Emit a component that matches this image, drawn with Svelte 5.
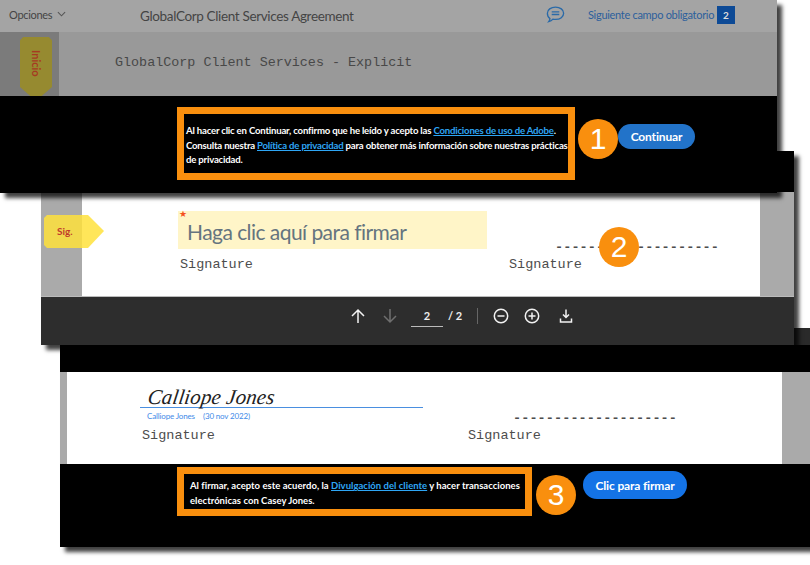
<script>
  // the three overlapping steps of the signing flow
  const dashes = '-'.repeat(20);
</script>

<div class="canvas">
  <section class="win three">
    <div class="strip"></div>
    <div class="black-top"></div>
    <div class="doc">
      <div class="gutter-l"></div>
      <div class="page">
        <div class="col signed">
          <div class="sig-line"><span class="hand">Calliope Jones</span></div>
          <div class="sig-meta"><span>Calliope Jones</span><span>(30 nov 2022)</span></div>
          <div class="mono">Signature</div>
        </div>
        <div class="col right">
          <div class="mono dash">{dashes}</div>
          <div class="mono">Signature</div>
        </div>
      </div>
      <div class="gutter-r"></div>
    </div>
    <div class="bar">
      <div class="callout">
        <div>Al firmar, acepto este acuerdo, la <a href="#a">Divulgación del cliente</a> y hacer transacciones</div>
        <div>electrónicas con Casey Jones.</div>
      </div>
      <button class="btn">Clic para firmar</button>
      <span class="badge">3</span>
    </div>
  </section>

  <section class="win two">
    <div class="black-top"></div>
    <div class="doc">
      <div class="gutter-l">
        <div class="tag">Sig.</div>
      </div>
      <div class="page">
        <div class="col field-col">
          <div class="field"><span class="star">★</span>Haga clic aquí para firmar</div>
          <div class="mono">Signature</div>
        </div>
        <div class="col right">
          <div class="mono dash">{dashes}</div>
          <div class="mono">Signature</div>
        </div>
      </div>
      <div class="gutter-r"></div>
    </div>
    <div class="tools">
      <svg class="ic" viewBox="0 0 16 16"><path d="M8 15V2M2 8l6-6 6 6" /></svg>
      <svg class="ic off" viewBox="0 0 16 16"><path d="M8 1v13M2 8l6 6 6-6" /></svg>
      <div class="pager"><span class="cur">2</span><span class="tot">/ 2</span></div>
      <i class="sep"></i>
      <svg class="ic" viewBox="0 0 16 16"><circle cx="8" cy="8" r="6.7" /><path d="M4.5 8h7" /></svg>
      <svg class="ic" viewBox="0 0 16 16"><circle cx="8" cy="8" r="6.7" /><path d="M4.5 8h7M8 4.5v7" /></svg>
      <svg class="ic dl" viewBox="0 0 16 16"><path d="M8 1.500v8M5 6.500l3 3 3-3M2.500 10.500v3.500h11v-3.500" /></svg>
    </div>
    <span class="badge">2</span>
  </section>

  <section class="win one">
    <header class="top">
      <span class="opts">Opciones</span>
      <svg class="chev" viewBox="0 0 10 6"><path d="M1 1l4 4 4-4" /></svg>
      <span class="title">GlobalCorp Client Services Agreement</span>
      <svg class="chat" viewBox="0 0 20 18"><path d="M10 1.200c5 0 8.600 2.800 8.600 6.500S15 14.200 10 14.200c-1 0-2-.1-2.800-.3-1 1.300-2.600 2.300-4.400 2.700.8-1 1.200-2 1.300-3.200C2.500 12.300 1.400 10.200 1.400 7.700 1.400 4 5 1.200 10 1.200z" /><path d="M6 6.300h8M6 9h8" /></svg>
      <span class="next">Siguiente campo obligatorio</span>
      <span class="count">2</span>
    </header>
    <div class="doc">
      <div class="gutter-l">
        <div class="start"><span>Inicio</span></div>
      </div>
      <div class="page"><div class="mono heading">GlobalCorp Client Services - Explicit</div></div>
    </div>
    <div class="bar">
      <div class="callout">
        <div>Al hacer clic en Continuar, confirmo que he leído y acepto las <a href="#a">Condiciones de uso de Adobe</a>.</div>
        <div>Consulta nuestra <a href="#a">Política de privacidad</a> para obtener más información sobre nuestras prácticas</div>
        <div>de privacidad.</div>
      </div>
      <button class="btn">Continuar</button>
      <span class="badge">1</span>
    </div>
  </section>
</div>

<style>
  :global(body) {
    margin: 0;
    background: #fff;
  }

  .canvas {
    position: relative;
    width: 810px;
    height: 565px;
    overflow: hidden;
    font-family: Lato, "Open Sans", sans-serif;
  }

  .win {
    position: absolute;
    display: flex;
    flex-direction: column;
    background: #000;
    box-shadow: 5px 5px 4px rgba(0, 0, 0, 0.75);
  }

  .doc {
    display: flex;
  }

  .page {
    flex: 1;
    display: flex;
    min-width: 0;
  }

  .col {
    display: flex;
    flex-direction: column;
  }

  .mono {
    font-family: "Liberation Mono", monospace;
    font-size: 13.5px;
    line-height: 15px;
    color: #4d4d4d;
    white-space: pre;
  }

  .callout {
    box-sizing: border-box;
    border: 7px solid #f98f0e;
    color: #fff;
    font-weight: 700;
    letter-spacing: -0.2px;
    white-space: nowrap;
  }

  .callout a {
    color: #2ea6f5;
    text-decoration: underline;
  }

  .btn {
    border: 0;
    border-radius: 14px;
    color: #fff;
    font: 700 12px Lato, sans-serif;
    letter-spacing: -0.15px;
    padding: 0;
  }

  .badge {
    position: absolute;
    width: 40px;
    height: 40px;
    border-radius: 50%;
    background: #f98f0e;
    color: #fff;
    font: 30px/40px "Liberation Sans", sans-serif;
    text-align: center;
  }

  /* step 1 */
  .one {
    left: 0;
    top: 0;
    width: 777px;
    height: 193px;
  }

  .one .top {
    height: 32px;
    flex: none;
    display: flex;
    align-items: center;
    background: #a4a4a4;
    color: #444;
  }

  .opts {
    margin: -4px 0 0 9px;
    width: 48px;
    flex: none;
    font-size: 11px;
    letter-spacing: -0.3px;
  }

  .chev {
    width: 9px;
    height: 6px;
    flex: none;
    margin-top: -5px;
    fill: none;
    stroke: #555;
    stroke-width: 1.2;
  }

  .title {
    margin-left: 74px;
    width: 406px;
    flex: none;
    font-size: 13.5px;
    letter-spacing: -0.35px;
    white-space: nowrap;
  }

  .chat {
    width: 19px;
    height: 17px;
    flex: none;
    margin-top: -3px;
    fill: none;
    stroke: #2a6aa8;
    stroke-width: 1.4;
  }

  .next {
    margin: -4px 0 0 23px;
    width: 129px;
    flex: none;
    font-size: 11px;
    letter-spacing: -0.3px;
    color: #2c5f9c;
    white-space: nowrap;
  }

  .count {
    width: 18px;
    height: 18px;
    flex: none;
    margin-top: -3px;
    background: #0d4a96;
    color: #ddd;
    font-size: 10px;
    font-weight: 700;
    line-height: 18px;
    text-align: center;
  }

  .one .doc {
    height: 64px;
    flex: none;
    background: #999;
  }

  .one .gutter-l {
    width: 59px;
    height: 64px;
    flex: none;
    background: #7b7b7b;
    overflow: hidden;
    padding: 5px 0 0 20px;
    box-sizing: border-box;
  }

  .start {
    width: 32px;
    height: 64px;
    background: #968a30;
    clip-path: polygon(10% 0, 90% 0, 100% 5%, 100% 78%, 50% 100%, 0 78%, 0 5%);
    display: flex;
    justify-content: center;
  }

  .start span {
    writing-mode: vertical-rl;
    margin-top: 13px;
    font-size: 11px;
    font-weight: 700;
    color: #a63a22;
  }

  .heading {
    margin: 23px 0 0 56px;
    font-size: 13.4px;
    color: #484848;
  }

  .one .bar {
    position: relative;
    flex: 1;
    display: flex;
    align-items: flex-start;
    padding: 11px 0 0 177px;
  }

  .one .callout {
    width: 398px;
    height: 73px;
    padding: 10px 0 0 2px;
    font-size: 9.6px;
    line-height: 14.5px;
  }

  .one .btn {
    width: 77px;
    height: 25px;
    margin: 17px 0 0 43px;
    background: #2273c9;
  }

  .one .badge {
    left: 578px;
    top: 23px;
  }

  /* step 2 */
  .two {
    left: 41px;
    top: 151px;
    width: 753px;
    height: 194px;
  }

  .two .black-top {
    height: 41px;
    flex: none;
  }

  .two .doc {
    height: 104px;
    flex: none;
    background: #fff;
  }

  .two .gutter-l {
    position: relative;
    width: 41px;
    flex: none;
    background: #aaa;
  }

  .two .gutter-r {
    width: 34px;
    flex: none;
    background: #aaa;
  }

  .tag {
    position: absolute;
    left: 3px;
    top: 23px;
    width: 60px;
    height: 33px;
    background: rgba(255, 226, 60, 0.85);
    clip-path: polygon(3px 0, 44px 0, 60px 16px, 44px 33px, 3px 33px, 0 30px, 0 3px);
    color: #c0392b;
    font-size: 10px;
    font-weight: 700;
    line-height: 33px;
    padding-left: 13px;
    box-sizing: border-box;
  }

  .field-col {
    margin: 19px 0 0 96px;
    width: 331px;
    flex: none;
  }

  .field {
    position: relative;
    width: 309px;
    height: 38px;
    background: #fff5c8;
    box-sizing: border-box;
    padding-left: 9px;
    color: #65747f;
    font-size: 21px;
    letter-spacing: -0.55px;
    line-height: 41px;
  }

  .star {
    position: absolute;
    left: 1px;
    top: -18px;
    color: #f5501e;
    font-size: 9px;
    letter-spacing: 0;
  }

  .field-col .mono {
    margin: 8px 0 0 2px;
  }

  .two .right {
    margin-top: 48px;
  }

  .dash {
    margin-left: 46px;
    letter-spacing: 0.1px;
    font-weight: 700;
  }

  .three .dash {
    margin-left: 45px;
  }

  .right .mono:last-child {
    margin-top: 2px;
  }

  .tools {
    flex: 1;
    display: flex;
    align-items: center;
    border-top: 1px solid #bbb;
    background: #2d2d2d;
    padding: 0 0 11px 309px;
    color: #eee;
  }

  .ic {
    width: 16px;
    height: 16px;
    flex: none;
    fill: none;
    stroke: #f2f2f2;
    stroke-width: 1.5;
  }

  .ic.off {
    margin-left: 16px;
    stroke: #6f6f6f;
  }

  .pager {
    margin-left: 13px;
    display: flex;
    align-items: center;
    font-size: 11px;
    font-weight: 700;
  }

  .cur {
    width: 32px;
    height: 21px;
    line-height: 21px;
    border-bottom: 1px solid #bbb;
    text-align: center;
    margin-top: 1px;
  }

  .tot {
    margin-left: 5px;
  }

  .sep {
    width: 1px;
    height: 16px;
    margin: 0 15px 0 15px;
    background: #666;
  }

  .ic + .ic:not(.off) {
    margin-left: 15px;
  }

  .ic.dl {
    margin-left: 18px;
    transform: translateX(3px);
  }

  .two .badge {
    left: 558px;
    top: 76px;
  }

  /* step 3 */
  .three {
    left: 60px;
    top: 328px;
    width: 760px;
    height: 219px;
  }

  .strip {
    height: 17px;
    flex: none;
    background: #2a2a2a;
  }

  .three .black-top {
    height: 27px;
    flex: none;
  }

  .three .doc {
    height: 92px;
    flex: none;
    background: #fff;
  }

  .three .gutter-l {
    width: 7px;
    flex: none;
    background: #aaa;
  }

  .three .gutter-r {
    width: 38px;
    flex: none;
    background: #aaa;
  }

  .signed {
    margin-left: 73px;
    width: 283px;
    flex: none;
  }

  .sig-line {
    height: 35px;
    border-bottom: 1px solid #4a8fe0;
  }

  .hand {
    display: inline-block;
    margin: 12px 0 0 8px;
    font-family: "Liberation Serif", serif;
    font-style: italic;
    font-size: 21px;
    line-height: 26px;
    color: #222;
    letter-spacing: 0.1px;
    transform: skewX(-8deg);
  }

  .sig-meta {
    display: flex;
    gap: 8px;
    margin: 3px 0 0 7px;
    color: #3f8ae8;
    font-size: 8px;
    letter-spacing: -0.15px;
    line-height: 11px;
  }

  .signed .mono {
    margin: 6px 0 0 2px;
  }

  .three .right {
    margin: 39px 0 0 45px;
  }

  .three .bar {
    position: relative;
    flex: 1;
    display: flex;
    align-items: flex-start;
    padding: 3px 0 0 117px;
  }

  .three .callout {
    width: 355px;
    height: 49px;
    padding: 5px 0 0 6px;
    font-size: 9.5px;
    letter-spacing: 0.02px;
    line-height: 14.5px;
  }

  .three .btn {
    width: 104px;
    height: 28px;
    margin: 4px 0 0 51px;
    background: #1473e6;
  }

  .three .badge {
    left: 476px;
    top: 11px;
  }
</style>
